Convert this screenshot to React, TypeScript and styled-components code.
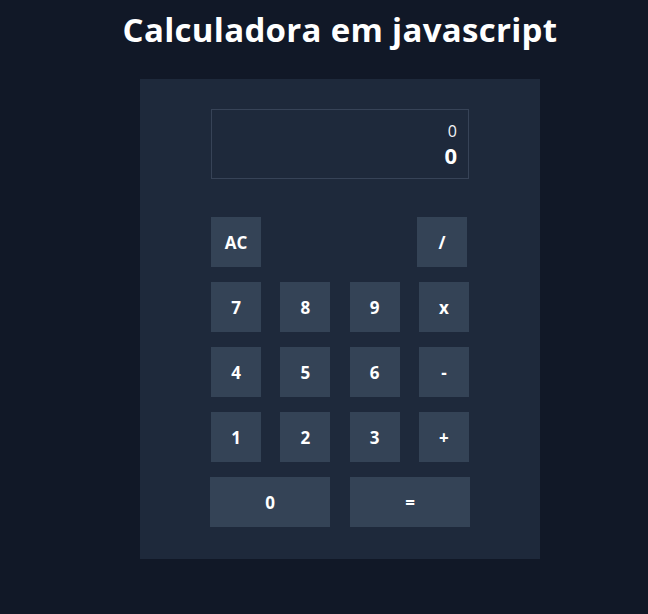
import styled, { createGlobalStyle } from 'styled-components'

const GlobalStyle = createGlobalStyle`
  html, body {
    margin: 0;
    padding: 0;
    background: #111827;
    font-family: "Open Sans", "Liberation Sans", sans-serif;
    color: #ffffff;
  }
`

const Page = styled.div`
  width: 100vw;
  height: 614px;
  padding-left: 32px;
  box-sizing: border-box;
  display: flex;
  flex-direction: column;
  align-items: center;
`

const Title = styled.h1`
  margin: 10px 0 0;
  height: 40px;
  font-size: 33px;
  font-weight: 700;
  line-height: 40px;
  letter-spacing: 0.3px;
`

const Panel = styled.div`
  margin-top: 29px;
  width: 400px;
  height: 480px;
  background: #1e293b;
  box-sizing: border-box;
  padding: 30px 70px 0 70px;
  display: flex;
  flex-direction: column;
`

const Display = styled.div`
  margin-left: 1px;
  width: 258px;
  height: 70px;
  box-sizing: border-box;
  border: 1px solid #374357;
  display: flex;
  flex-direction: column;
  align-items: flex-end;
  justify-content: center;
  padding: 0 11px;
`

const Previous = styled.div`
  font-size: 16px;
  font-weight: 400;
  line-height: 22px;
  color: #f3f4f6;
`

const Current = styled.div`
  font-size: 22px;
  font-weight: 700;
  line-height: 26px;
`

const Keys = styled.div`
  margin-top: 38px;
  display: flex;
  flex-direction: column;
  gap: 15px;
`

const Row = styled.div<{ $width: number; $pad: number }>`
  display: flex;
  justify-content: space-between;
  padding-left: ${p => p.$pad}px;
  width: ${p => p.$width}px;
  box-sizing: border-box;
`

const Key = styled.button<{ $wide?: boolean }>`
  width: ${p => (p.$wide ? 120 : 50)}px;
  height: 50px;
  border: none;
  padding: 0;
  background: #344356;
  color: #ffffff;
  font-family: "Open Sans", "Liberation Sans", sans-serif;
  font-size: 17px;
  font-weight: 700;
  cursor: pointer;
`

export default function App() {
  const rows = [
    ['7', '8', '9', 'x'],
    ['4', '5', '6', '-'],
    ['1', '2', '3', '+'],
  ]
  return (
    <>
      <GlobalStyle />
      <Page>
        <Title>Calculadora em javascript</Title>
        <Panel>
          <Display>
            <Previous>0</Previous>
            <Current>0</Current>
          </Display>
          <Keys>
            <Row $width={257} $pad={1}>
              <Key>AC</Key>
              <Key>/</Key>
            </Row>
            {rows.map((r, i) => (
              <Row key={i} $width={259} $pad={1}>
                {r.map(k => (
                  <Key key={k}>{k}</Key>
                ))}
              </Row>
            ))}
            <Row $width={260} $pad={0}>
              <Key $wide>0</Key>
              <Key $wide>=</Key>
            </Row>
          </Keys>
        </Panel>
      </Page>
    </>
  )
}
